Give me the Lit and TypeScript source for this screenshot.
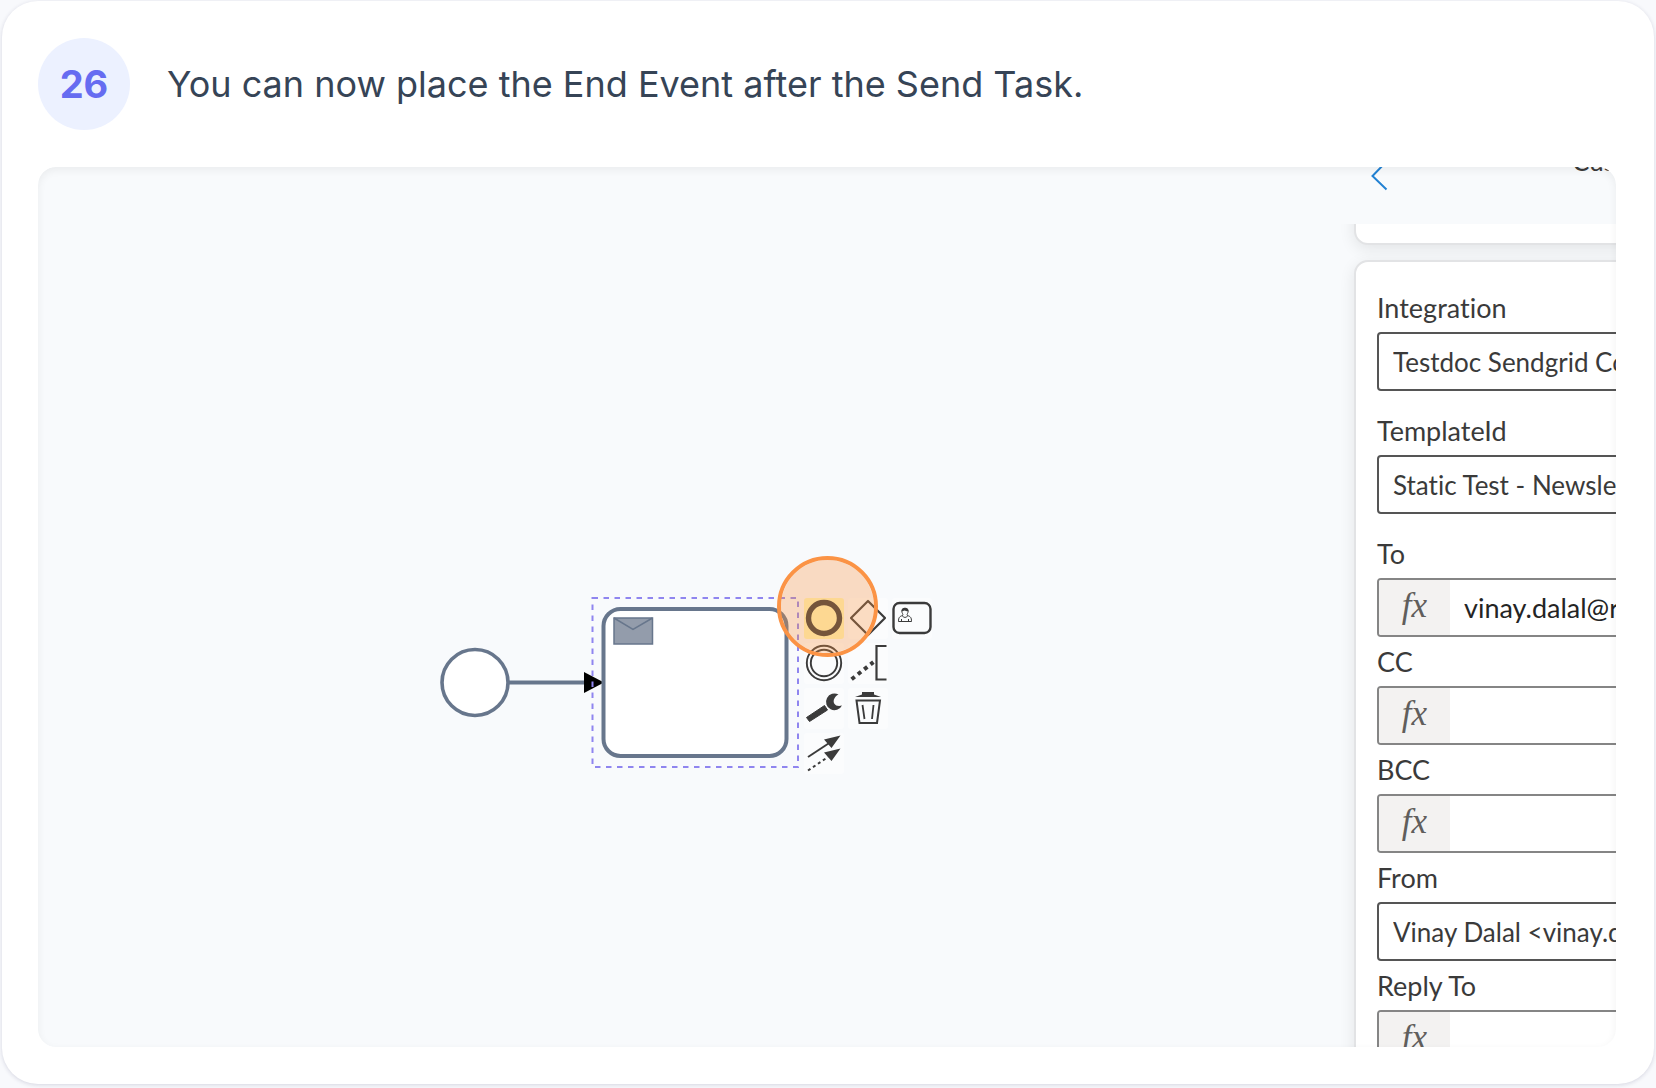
import { LitElement, html, css, svg } from "lit";
import { customElement } from "lit/decorators.js";

interface Field {
  id: string;
  label: string;
  kind: "select" | "formula";
  value: string;
  spaced?: boolean;
}

const FIELDS: Field[] = [
  { id: "integration", label: "Integration", kind: "select", value: "Testdoc Sendgrid Connection", spaced: true },
  { id: "template", label: "TemplateId", kind: "select", value: "Static Test - Newsletter", spaced: true },
  { id: "to", label: "To", kind: "formula", value: "vinay.dalal@rapid.com" },
  { id: "cc", label: "CC", kind: "formula", value: "" },
  { id: "bcc", label: "BCC", kind: "formula", value: "" },
  { id: "from", label: "From", kind: "select", value: "Vinay Dalal <vinay.dalal@rapid.com>" },
  { id: "reply", label: "Reply To", kind: "formula", value: "" },
];

// Context pad entries in row order; null leaves a grid cell empty.
const PAD = [
  {
    name: "Append end event",
    active: true,
    icon: svg`<circle cx="20" cy="20" r="15.5" fill="none" stroke="#3b3b3b" stroke-width="5.4"/>`,
  },
  {
    name: "Append gateway",
    icon: svg`<path d="M20 3 37 20 20 37 3 20Z" fill="none" stroke="#3b3b3b" stroke-width="2.2" stroke-linejoin="round"/>`,
  },
  {
    name: "Append user task",
    icon: svg`<rect x="1.5" y="5" width="37" height="30" rx="6" fill="none" stroke="#3b3b3b" stroke-width="2.4"/>
      <g fill="none" stroke="#3b3b3b" stroke-width="1" stroke-linejoin="round">
      <path d="M10.5 17.5C7.5 18.5 6.5 19.5 6.5 23.5H19.5C19.5 19.5 18.5 18.5 15.5 17.5"/>
      <path d="M10.5 17.5C10.5 20 15.5 20 15.5 17.5C15 17 15 16.5 15.5 15.5C17 12.5 16 10.5 13 10.5S9 12.5 10.5 15.5C11 16.5 11 17 10.5 17.5Z"/>
      <path d="M9.5 23.5V21M16.5 23.5V21"/></g>
      <path d="M9.8 13.5C9.5 10.5 11 9.8 13 9.8S16.5 10.5 16.2 13.5C14.5 13.5 13.5 12.5 12.5 12.5S11 13.5 9.8 13.5Z" fill="#3b3b3b"/>`,
  },
  {
    name: "Append intermediate event",
    icon: svg`<g fill="none" stroke="#3b3b3b" stroke-width="1.9"><circle cx="20" cy="20" r="17.2"/><circle cx="20" cy="20" r="13.2"/></g>`,
  },
  {
    name: "Append text annotation",
    icon: svg`<path d="M38.5 3H28.5V36.5H38.5" fill="none" stroke="#3b3b3b" stroke-width="2.2"/>
      <path d="M3.6 36.2 25.4 19.1" fill="none" stroke="#3b3b3b" stroke-width="4" stroke-dasharray="4 4"/>`,
  },
  null,
  {
    name: "Change type",
    icon: svg`<path d="M2.5 29.5 20.5 17.5 23.5 22 5.5 33.5Z" fill="#3b3b3b" stroke="#3b3b3b" stroke-width="1"/>
      <path d="M34.5 6.5A8.4 8.4 0 1 0 38 17.5C35 18.5 31.5 18 30.2 15.5C28.8 12.5 30.5 8.5 34.5 6.5Z" fill="#3b3b3b"/>`,
  },
  {
    name: "Remove",
    icon: svg`<path d="M7 9 14 6.5V4H26V6.5L33 9Z" fill="#3b3b3b"/>
      <path d="M8.5 12.5H32L29 35H11.5Z" fill="none" stroke="#3b3b3b" stroke-width="2"/>
      <path d="M14.5 17 16.5 31M25.5 17 24 31" fill="none" stroke="#3b3b3b" stroke-width="1.8"/>`,
  },
  null,
  {
    name: "Connect",
    icon: svg`<path d="M4 24 26 9.5" stroke="#3b3b3b" stroke-width="2"/>
      <path d="M4 37.5 24 24" stroke="#3b3b3b" stroke-width="2" stroke-dasharray="3 3"/>
      <path d="M36.5 2.5 20 6.5 27.5 15ZM36.5 15.5 20 19.5 27.5 28Z" fill="#3b3b3b"/>`,
  },
];

@customElement("process-canvas")
export class ProcessCanvas extends LitElement {
  static styles = css`
    :host {
      display: block;
      position: relative;
      overflow: hidden;
    }
    .diagram {
      display: block;
      width: 960px;
      height: 700px;
    }
    .pad {
      position: absolute;
      left: 766px;
      top: 431px;
      display: grid;
      grid-template-columns: repeat(3, 40px);
      grid-auto-rows: 41px;
      gap: 4px;
    }
    .entry {
      display: flex;
      padding: 0;
      border: 0;
      border-radius: 3px;
      background: #fbfcfd;
    }
    .active {
      background: #fef6b8;
    }
    .icon {
      width: 40px;
      height: 40px;
    }
    .click {
      position: absolute;
      left: 739px;
      top: 389px;
      width: 93px;
      height: 93px;
      border: 4px solid #fb9345;
      border-radius: 50%;
      background: rgba(251, 146, 60, 0.3);
      background-clip: padding-box;
      pointer-events: none;
    }
  `;

  render() {
    return html`
      <svg class="diagram" viewBox="0 0 960 700" role="img" aria-label="Start event connected to a send task">
        <circle cx="437" cy="515.5" r="33" fill="#fff" stroke="#67768c" stroke-width="3.6" />
        <path d="M471 515.5H548" stroke="#67768c" stroke-width="4" />
        <path d="M546 505 566 515.5 546 526Z" fill="#000" />
        <rect x="565.5" y="442" width="183" height="147" rx="17" fill="#fff" stroke="#67768c" stroke-width="4" />
        <rect x="576" y="451" width="38.5" height="26" fill="#939cab" stroke="#67768c" stroke-width="1.5" />
        <path d="M576 451 595 462.5 614.5 451" fill="none" stroke="#67768c" stroke-width="1.5" />
        <rect x="554.5" y="431" width="205.5" height="169" fill="none" stroke="#8f85ef" stroke-width="2" stroke-dasharray="5.5 5.5" />
      </svg>
      <div class="pad">
        ${PAD.map((e) =>
          e
            ? html`<button class="entry ${e.active ? "active" : ""}" aria-label=${e.name}>
                <svg class="icon" viewBox="0 0 40 40">${e.icon}</svg>
              </button>`
            : html`<span></span>`
        )}
      </div>
      <div class="click"></div>
    `;
  }
}

@customElement("settings-panel")
export class SettingsPanel extends LitElement {
  static styles = css`
    :host {
      display: block;
      overflow: hidden;
      font-family: Lato, "Liberation Sans", sans-serif;
      font-size: 26px;
      font-variant-ligatures: none;
      color: #3a3a3a;
    }
    .inner {
      width: 480px;
      padding-left: 20px;
    }
    .bar {
      display: flex;
      align-items: flex-start;
      gap: 182px;
      height: 57px;
      padding-left: 16px;
    }
    .back {
      display: flex;
      padding: 0;
      border: 0;
      background: none;
    }
    .chevron {
      width: 20px;
      height: 24px;
    }
    .title {
      margin: -22px 0 0;
      font-size: 26px;
      line-height: 32px;
      font-weight: 400;
    }
    .clip {
      overflow: hidden;
      margin-left: -20px;
      padding-left: 20px;
    }
    .card {
      box-sizing: border-box;
      border: 2px solid #e2e3e5;
      border-radius: 14px;
      background: #fff;
      box-shadow: 0 4px 16px rgba(0, 0, 0, 0.09);
    }
    .previous {
      height: 41px;
      margin-top: -20px;
      margin-bottom: 15px;
    }
    .form {
      padding: 30px 21px;
    }
    .field {
      display: flex;
      flex-direction: column;
      margin-bottom: 9px;
    }
    .spaced {
      margin-bottom: 24px;
    }
    .label {
      padding-bottom: 8px;
      font-size: 27px;
      line-height: 32px;
    }
    .control {
      box-sizing: border-box;
      display: flex;
      height: 59px;
      border: 2px solid #555;
      border-radius: 4px;
      background: #fff;
      overflow: hidden;
    }
    .formula {
      border-color: #858585;
    }
    .fx {
      display: flex;
      flex: none;
      align-items: center;
      justify-content: center;
      width: 71px;
      padding-bottom: 4px;
      box-sizing: border-box;
      background: #f3f2f1;
      color: #605e5c;
      font-family: "Liberation Serif", serif;
      font-size: 35px;
      font-style: italic;
    }
    .entry {
      flex: 1;
      min-width: 0;
      padding: 0 14px;
      border: 0;
      outline: 0;
      appearance: none;
      background: none;
      font: inherit;
      color: inherit;
    }
    .text {
      color: #242424;
      font-size: 27px;
    }
  `;

  render() {
    return html`
      <div class="inner">
        <header class="bar">
          <button class="back" aria-label="Back">
            <svg class="chevron" viewBox="0 0 20 24">
              <path d="M17-6 2.5 9 16.5 22.5" fill="none" stroke="#2382d3" stroke-width="2" />
            </svg>
          </button>
          <h2 class="title">Customize</h2>
        </header>
        <div class="clip">
          <div class="card previous"></div>
          <form class="card form">${FIELDS.map((f) => this.field(f))}</form>
        </div>
      </div>
    `;
  }

  private field(f: Field) {
    return html`
      <div class="field ${f.spaced ? "spaced" : ""}">
        <label class="label" for=${f.id}>${f.label}</label>
        ${f.kind === "select"
          ? html`<div class="control">
              <select class="entry" id=${f.id}>
                <option>${f.value}</option>
              </select>
            </div>`
          : html`<div class="control formula">
              <span class="fx">fx</span>
              <input class="entry text" id=${f.id} type="text" .value=${f.value} />
            </div>`}
      </div>
    `;
  }
}

@customElement("app-root")
export class AppRoot extends LitElement {
  static styles = css`
    :host {
      display: flex;
      box-sizing: border-box;
      min-height: 100vh;
      padding: 1px 2px 4px;
      background: #f8f9fc;
    }
    .step {
      box-sizing: border-box;
      display: flex;
      flex: 1;
      flex-direction: column;
      gap: 37px;
      min-width: 0;
      padding: 37px 38px 37px 36px;
      border-radius: 36px;
      background: #fff;
      box-shadow: 0 1px 4px rgba(30, 30, 80, 0.16);
    }
    .head {
      display: flex;
      align-items: center;
      gap: 37px;
    }
    .number {
      display: flex;
      flex: none;
      align-items: center;
      justify-content: center;
      width: 92px;
      height: 92px;
      border-radius: 50%;
      background: #ecf1ff;
      color: #666cf1;
      font: 700 38px Inter, sans-serif;
    }
    .title {
      margin: 0;
      color: #364456;
      font: 400 36px/48px Inter, sans-serif;
    }
    .stage {
      position: relative;
      display: grid;
      flex: 1;
      grid-template-columns: minmax(0, 1fr) 282px;
      grid-template-rows: 880px;
      overflow: hidden;
      border-radius: 18px;
      background: #f8fafc;
    }
    .stage::after {
      content: "";
      position: absolute;
      inset: 0;
      border-radius: inherit;
      box-shadow: inset 0 3px 9px rgba(0, 0, 0, 0.06);
      pointer-events: none;
    }
  `;

  render() {
    return html`
      <article class="step">
        <header class="head">
          <span class="number">26</span>
          <h1 class="title">You can now place the End Event after the Send Task.</h1>
        </header>
        <section class="stage">
          <process-canvas></process-canvas>
          <settings-panel></settings-panel>
        </section>
      </article>
    `;
  }
}
